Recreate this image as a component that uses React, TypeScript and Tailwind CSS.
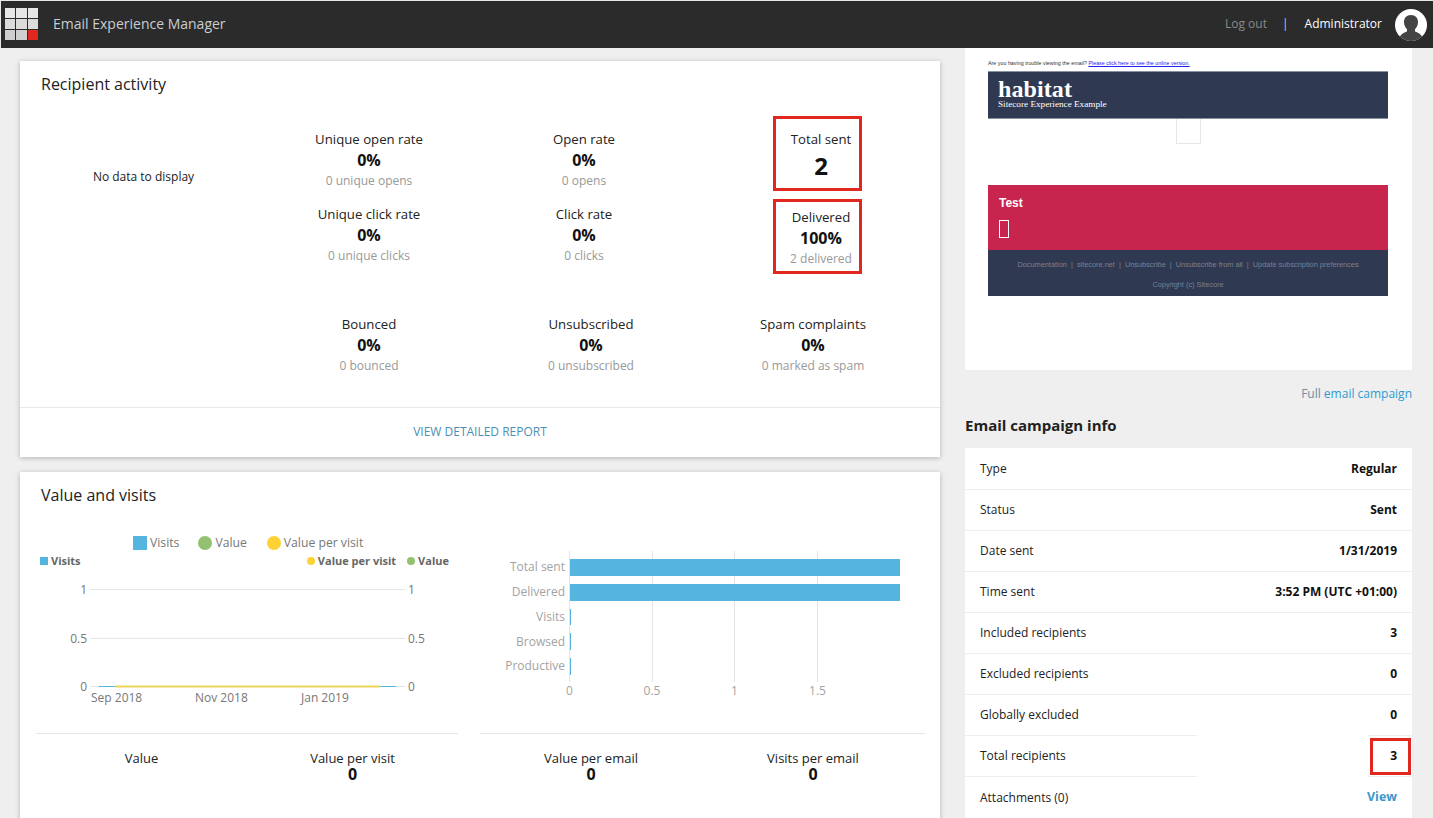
import React from "react";

const Metric = ({ label, value, sub, className = "" }: { label: string; value: string; sub: string; className?: string }) => (
  <div className={`flex flex-col items-center ${className}`}>
    <div className="text-[13.2px] leading-[18px] text-[#222]">{label}</div>
    <div className="text-[16px] leading-[24px] font-bold text-[#111]">{value}</div>
    <div className="text-[12px] leading-[18px] text-[#999]">{sub}</div>
  </div>
);

const rows: [string, string][] = [
  ["Type", "Regular"],
  ["Status", "Sent"],
  ["Date sent", "1/31/2019"],
  ["Time sent", "3:52 PM (UTC +01:00)"],
  ["Included recipients", "3"],
  ["Excluded recipients", "0"],
  ["Globally excluded", "0"],
  ["Total recipients", "3"],
];

const font = "Open Sans, sans-serif";

function LineChart() {
  return (
    <svg width="420" height="140" viewBox="0 0 420 140" className="block">
      <g stroke="#e6e6e6" strokeWidth="1">
        <line x1="54" x2="369" y1="14.5" y2="14.5" />
        <line x1="54" x2="369" y1="63.5" y2="63.5" />
        <line x1="54" x2="369" y1="111.5" y2="111.5" />
      </g>
      <line x1="63" x2="360" y1="111.5" y2="111.5" stroke="#55b5de" strokeWidth="1" />
      <line x1="79" x2="344" y1="111.5" y2="111.5" stroke="#ecd75a" strokeWidth="2" />
      <g fontFamily={font} fontSize="12" fill="#777">
        <text x="51" y="19" textAnchor="end">1</text>
        <text x="51" y="68" textAnchor="end">0.5</text>
        <text x="51" y="116" textAnchor="end">0</text>
        <text x="372" y="19">1</text>
        <text x="372" y="68">0.5</text>
        <text x="372" y="116">0</text>
        <text x="55" y="126.5">Sep 2018</text>
        <text x="159" y="126.5">Nov 2018</text>
        <text x="265" y="126.5">Jan 2019</text>
      </g>
    </svg>
  );
}

function BarChart() {
  const labels: [string, number][] = [
    ["Total sent", 36],
    ["Delivered", 61],
    ["Visits", 86],
    ["Browsed", 111],
    ["Productive", 135],
  ];
  return (
    <svg width="445" height="170" viewBox="0 0 445 170" className="block">
      <g stroke="#e4e4e4" strokeWidth="1">
        <line x1="89.5" x2="89.5" y1="21" y2="152" />
        <line x1="172.5" x2="172.5" y1="21" y2="152" />
        <line x1="254.5" x2="254.5" y1="21" y2="152" />
        <line x1="337.5" x2="337.5" y1="21" y2="152" />
      </g>
      <rect x="90" y="29" width="330" height="17" fill="#55b5de" />
      <rect x="90" y="54" width="330" height="17" fill="#55b5de" />
      <rect x="90" y="79" width="1" height="16" fill="#55b5de" />
      <rect x="90" y="103" width="1" height="17" fill="#55b5de" />
      <rect x="90" y="128" width="1" height="17" fill="#55b5de" />
      <g fontFamily={font} fontSize="12" fill="#a3a3a3">
        {labels.map(([l, y]) => (
          <text key={l} x="85" y={y + 5} textAnchor="end">{l}</text>
        ))}
        <text x="89.5" y="165" textAnchor="middle">0</text>
        <text x="172" y="165" textAnchor="middle">0.5</text>
        <text x="254.5" y="165" textAnchor="middle">1</text>
        <text x="337.5" y="165" textAnchor="middle">1.5</text>
      </g>
    </svg>
  );
}

const Small = ({ label, value, className = "w-[211px]" }: { label: string; value?: string; className?: string }) => (
  <div className={`flex flex-col items-center ${className}`}>
    <div className="text-[13px] leading-[16px] text-[#222]">{label}</div>
    <div className="text-[16px] leading-[16px] font-bold text-[#111] h-[16px]">{value}</div>
  </div>
);

export default function App() {
  return (
    <div className="h-[818px] w-[1433px] overflow-hidden bg-[#efefef] relative" style={{ fontFamily: font }}>
      <header className="h-[48px] bg-[#2b2b2b] flex items-center border-t border-l border-t-[#e8e8e8] border-l-[#e8e8e8]">
        <div className="ml-[4px] mt-[-1px] grid grid-cols-3 gap-[1px] w-[33px]">
          {Array.from({ length: 9 }).map((_, i) => (
            <div key={i} className={`h-[10px] ${i === 8 ? "bg-[#e1281d]" : i < 3 ? "bg-[#e6e6e6]" : i < 6 ? "bg-[#dcdcdc]" : "bg-[#cfcfcf]"}`} />
          ))}
        </div>
        <div className="ml-[15px] mt-[-3px] text-[14px] text-[#c9cdd0]">Email Experience Manager</div>
        <div className="ml-auto flex items-center">
          <span className="mt-[-2px] text-[12px] text-[#8a8a8a]">Log out</span>
          <span className="ml-[15px] mt-[-2px] text-[12px] text-[#9fd2ee]">|</span>
          <span className="ml-[16px] mt-[-2px] text-[12px] text-white">Administrator</span>
          <svg width="32" height="32" viewBox="0 0 32 32" className="ml-[13px] mr-[6px]">
            <defs>
              <clipPath id="av"><circle cx="16" cy="16" r="16" /></clipPath>
            </defs>
            <g clipPath="url(#av)">
              <rect width="32" height="32" fill="#fff" />
              <path d="M16 6c-4.500 0-7 3-7 7 0 3 1.200 5.600 3 7.200v2.300C8 24 4.500 26 3 32h26c-1.500-6-5-8-9-9.500v-2.300c1.800-1.600 3-4.200 3-7.200 0-4-2.500-7-7-7z" fill="#444" />
            </g>
          </svg>
        </div>
      </header>

      <main className="flex pl-[20px] gap-[25px]">
        <section className="w-[920px] shrink-0 pt-[13px] flex flex-col gap-[15px]">
          <div className="bg-white shadow-[0_1px_5px_rgba(0,0,0,0.25)] h-[396px] relative flex flex-col">
            <h2 className="pl-[21px] pt-[12px] text-[16px] leading-[22px] text-[#222]">Recipient activity</h2>
            <div className="flex pt-[35px] flex-1">
              <div className="w-[238px] shrink-0 pt-[38px] pl-[19px] pr-[10px] text-center text-[12px] text-[#222] leading-[18px]">No data to display</div>
              <div className="grid grid-cols-[222px_222px_222px] content-start">
                <Metric label="Unique open rate" value="0%" sub="0 unique opens" className="h-[75px]" />
                <Metric label="Open rate" value="0%" sub="0 opens" className="pr-[14px]" />
                <div className="flex flex-col items-center pl-[16px]">
                  <div className="text-[13.2px] leading-[18px] text-[#222]">Total sent</div>
                  <div className="text-[24px] leading-[36px] font-bold text-[#111]">2</div>
                </div>
                <Metric label="Unique click rate" value="0%" sub="0 unique clicks" className="h-[110px]" />
                <Metric label="Click rate" value="0%" sub="0 clicks" className="pr-[14px]" />
                <Metric label="Delivered" value="100%" sub="2 delivered" className="pl-[16px] mt-[3px]" />
                <Metric label="Bounced" value="0%" sub="0 bounced" />
                <Metric label="Unsubscribed" value="0%" sub="0 unsubscribed" />
                <Metric label="Spam complaints" value="0%" sub="0 marked as spam" />
              </div>
            </div>
            <div className="h-[50px] pb-[2px] border-t border-[#e9e9e9] flex items-center justify-center text-[12px] text-[#4b8fb5]">VIEW DETAILED REPORT</div>
            <div className="absolute left-[753px] top-[55px] w-[89px] h-[75px] border-[3px] border-[#e0281f]" />
            <div className="absolute left-[753px] top-[138px] w-[89px] h-[75px] border-[3px] border-[#e0281f]" />
          </div>

          <div className="bg-white shadow-[0_1px_5px_rgba(0,0,0,0.25)] h-[400px] flex flex-col">
            <h2 className="pl-[21px] pt-[12px] text-[16px] leading-[22px] text-[#222]">Value and visits</h2>
            <div className="flex pl-[16px] h-[213px] mt-[14px]">
              <div className="w-[422px] shrink-0 relative">
                <div className="flex items-center justify-start pl-[97px] h-[14px] mt-[16px] text-[12.2px] text-[#777]">
                  <span className="w-[14px] h-[14px] bg-[#55b5de]" />
                  <span className="ml-[3px]">Visits</span>
                  <span className="ml-[19px] w-[14px] h-[14px] rounded-full bg-[#93c16f]" />
                  <span className="ml-[3px]">Value</span>
                  <span className="ml-[20px] w-[14px] h-[14px] rounded-full bg-[#fdd235]" />
                  <span className="ml-[3px]">Value per visit</span>
                </div>
                <div className="flex items-center h-[14px] mt-[4px] pl-[4px] pr-[9px] text-[11px] font-bold text-[#666]">
                  <span className="w-[8px] h-[8px] bg-[#55b5de]" />
                  <span className="ml-[3px]">Visits</span>
                  <span className="ml-auto w-[8px] h-[8px] rounded-full bg-[#fdd235]" />
                  <span className="ml-[3px]">Value per visit</span>
                  <span className="ml-[11px] w-[8px] h-[8px] rounded-full bg-[#93c16f]" />
                  <span className="ml-[3px]">Value</span>
                </div>
                <div className="mt-[7px]">
                  <LineChart />
                </div>
              </div>
              <div className="ml-[22px] mt-[10px]">
                <BarChart />
              </div>
            </div>
            <div className="flex pl-[16px]">
              <div className="w-[422px] border-t border-[#e6e6e6] flex pt-[16px]">
                <Small label="Value" />
                <Small label="Value per visit" value="0" />
              </div>
              <div className="ml-[22px] w-[445px] border-t border-[#e6e6e6] flex pt-[16px]">
                <Small label="Value per email" value="0" className="w-[222px]" />
                <Small label="Visits per email" value="0" className="w-[222px]" />
              </div>
            </div>
          </div>
        </section>

        <aside className="w-[447px] shrink-0 flex flex-col">
          <div className="bg-white h-[322px] px-[23px] pt-[12px]">
            <div className="text-[5.35px] leading-[6px] h-[11px] text-[#333]" style={{ fontFamily: "Liberation Sans, sans-serif" }}>
              Are you having trouble viewing the email? <span className="text-[#2222ee] underline">Please click here to see the online version.</span>
            </div>
            <div className="w-[400px]" style={{ fontFamily: "Liberation Sans, sans-serif" }}>
              <div className="h-[48px] bg-[#2f3a52] border-y border-[#8a92a2] pl-[10px] text-white" style={{ fontFamily: "Liberation Serif, serif" }}>
                <div className="text-[24px] leading-[20px] mt-[7px] font-bold tracking-[0.1px]">habitat</div>
                <div className="text-[9.2px] leading-[10px]">Sitecore Experience Example</div>
              </div>
              <div className="h-[66px]">
                <div className="mx-auto w-[25px] h-[25px] border border-t-0 border-[#e6e6e6]" />
              </div>
              <div className="h-[65px] bg-[#c8254e] pl-[11px] pt-[11px] text-white">
                <div className="text-[12px] leading-[14px] font-bold">Test</div>
                <div className="mt-[10px] w-[10px] h-[18px] border border-white" />
              </div>
              <div className="h-[46px] bg-[#2f3a52] text-[7.35px] text-[#7a8090] text-center pt-[10px] leading-[10px]">
                <div>Documentation&nbsp; |&nbsp; sitecore.net&nbsp; |&nbsp; Unsubscribe&nbsp; |&nbsp; Unsubscribe from all&nbsp; |&nbsp; Update subscription preferences</div>
                <div className="mt-[10px]">Copyright (c) Sitecore</div>
              </div>
            </div>
          </div>
          <div className="text-right text-[12px] leading-[18px] mt-[15px] text-[#6d8ea3]">
            Full <span className="text-[#2e9bd0]">email campaign</span>
          </div>
          <h3 className="mt-[12px] text-[15px] leading-[20px] font-bold text-[#222]">Email campaign info</h3>
          <div className="mt-[13px] pt-[1px] bg-white relative">
            {rows.map(([k, v]) => (
              <div key={k} className="h-[41px] px-[15px] border-b border-[#eeeeee] flex items-center justify-between text-[12px] text-[#222]">
                <span>{k}</span>
                <span className="font-bold text-[#111] text-[12px]">{v}</span>
              </div>
            ))}
            <div className="h-[41px] px-[15px] flex items-center justify-between text-[12px] text-[#222]">
              <span>Attachments (0)</span>
              <span className="font-bold text-[#3d97c9] text-[12.5px]">View</span>
            </div>
            <div className="absolute left-[232px] top-[287px] w-[171px] h-[42px] bg-white" />
            <div className="absolute left-[405px] top-[290px] w-[41px] h-[37px] border-[3px] border-[#e0281f]" />
          </div>
        </aside>
      </main>
    </div>
  );
}
